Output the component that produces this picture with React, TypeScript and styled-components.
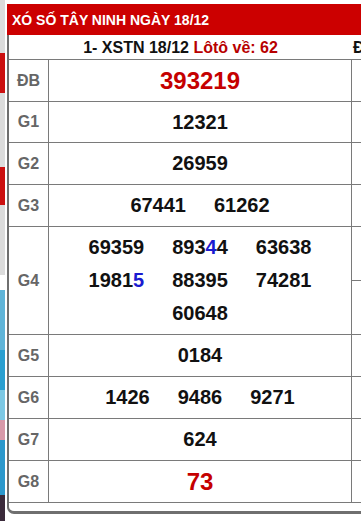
import React from 'react'
import styled, { createGlobalStyle } from 'styled-components'

const GlobalStyle = createGlobalStyle`
  html, body {
    margin: 0;
    padding: 0;
    background: #ffffff;
    font-family: 'Liberation Sans', Arial, sans-serif;
  }
`

const Page = styled.div`
  width: 361px;
  height: 521px;
  display: flex;
  gap: 2px;
  overflow: hidden;
`

const Strip = styled.div`
  width: 5px;
  flex: none;
  display: flex;
  flex-direction: column;
`

const StripPart = styled.div<{ $h: number; $bg: string }>`
  height: ${({ $h }) => $h}px;
  flex: none;
  background: ${({ $bg }) => $bg};
`

const Card = styled.div`
  margin-top: 4px;
  flex: 1;
  min-width: 0;
  align-self: flex-start;
  overflow: hidden;
`

const Header = styled.div`
  height: 31px;
  background: #cc0000;
  color: #ffffff;
  font-weight: bold;
  font-size: 14px;
  line-height: 32px;
  padding-left: 5px;
  white-space: nowrap;
`

const Body = styled.div`
  display: flex;
  border-left: 2px solid #6f6f6f;
  border-bottom: 3px solid #6f6f6f;
  border-bottom-left-radius: 7px;
  padding-bottom: 8px;
  width: 480px;
`

const MainPanel = styled.div`
  width: 343px;
  flex: none;
`

const SidePanel = styled.div`
  flex: 1;
`

const Subtitle = styled.div<{ $align: 'center' | 'left' }>`
  height: 24px;
  line-height: 26px;
  font-size: 16px;
  font-weight: bold;
  color: #111111;
  text-align: ${({ $align }) => $align};
  padding-left: ${({ $align }) => ($align === 'left' ? '1px' : '0')};
  white-space: nowrap;
`

const Loto = styled.span`
  color: #b80000;
`

const Row = styled.div<{ $h: number }>`
  display: flex;
  height: ${({ $h }) => $h}px;
  border-top: 1px solid #7a7a7a;
  box-sizing: border-box;
`

const Label = styled.div`
  width: 39px;
  flex: none;
  border-right: 1px solid #7a7a7a;
  display: flex;
  align-items: center;
  justify-content: center;
  color: #666666;
  font-weight: bold;
  font-size: 16px;
`

const Numbers = styled.div`
  flex: 1;
  border-right: 1px solid #7a7a7a;
  display: flex;
  flex-wrap: wrap;
  align-content: center;
  justify-content: center;
  column-gap: 28px;
  padding: 0 4px;
`

const Num = styled.span<{ $big?: boolean; $red?: boolean }>`
  font-weight: bold;
  font-size: ${({ $big }) => ($big ? '24px' : '20px')};
  line-height: 33px;
  color: ${({ $red }) => ($red ? '#c50000' : '#111111')};
`

const Hit = styled.span`
  color: #1a1ad0;
`

const SideCell = styled.div<{ $h: number }>`
  height: ${({ $h }) => $h}px;
  border-top: 1px solid #7a7a7a;
  box-sizing: border-box;
`

type Prize = {
  label: string
  height: number
  values: string[]
  big?: boolean
  red?: boolean
}

const prizes: Prize[] = [
  { label: 'ĐB', height: 42, values: ['393219'], big: true, red: true },
  { label: 'G1', height: 41, values: ['12321'] },
  { label: 'G2', height: 42, values: ['26959'] },
  { label: 'G3', height: 42, values: ['67441', '61262'] },
  {
    label: 'G4',
    height: 108,
    values: ['69359', '89344', '63638', '19815', '88395', '74281', '60648']
  },
  { label: 'G5', height: 42, values: ['0184'] },
  { label: 'G6', height: 42, values: ['1426', '9486', '9271'] },
  { label: 'G7', height: 42, values: ['624'] },
  { label: 'G8', height: 42, values: ['73'], big: true, red: true }
]

const highlight: Record<string, number> = {
  '89344': 3,
  '19815': 4
}

const renderValue = (value: string): React.ReactNode => {
  const at = highlight[value]
  if (at === undefined) return value
  return (
    <>
      {value.slice(0, at)}
      <Hit>{value[at]}</Hit>
      {value.slice(at + 1)}
    </>
  )
}

const sideHeights = [42, 41, 42, 42, 54, 54, 42, 42, 42, 42]

const strip: Array<[number, string]> = [
  [53, '#dcdcdc'],
  [40, '#cc1010'],
  [74, '#dcdcdc'],
  [38, '#cc1010'],
  [70, '#dcdcdc'],
  [15, '#ffffff'],
  [60, '#5fb4d8'],
  [40, '#2a9fd0'],
  [30, '#7cc8e4'],
  [20, '#d89aaa'],
  [55, '#2c98cc'],
  [26, '#3a2a3a']
]

export default function App() {
  return (
    <Page>
      <GlobalStyle />
      <Strip>
        {strip.map(([h, bg], i) => (
          <StripPart key={i} $h={h} $bg={bg} />
        ))}
      </Strip>
      <Card>
        <Header>XÓ SỐ TÂY NINH NGÀY 18/12</Header>
        <Body>
          <MainPanel>
            <Subtitle $align="center">
              1- XSTN 18/12 <Loto>Lôtô về: 62</Loto>
            </Subtitle>
            {prizes.map((p) => (
              <Row key={p.label} $h={p.height}>
                <Label>{p.label}</Label>
                <Numbers>
                  {p.values.map((v, i) => (
                    <Num key={i} $big={p.big} $red={p.red}>
                      {renderValue(v)}
                    </Num>
                  ))}
                </Numbers>
              </Row>
            ))}
            <Row $h={1} />
          </MainPanel>
          <SidePanel>
            <Subtitle $align="left">Đầu</Subtitle>
            {sideHeights.map((h, i) => (
              <SideCell key={i} $h={h} />
            ))}
            <SideCell $h={1} />
          </SidePanel>
        </Body>
      </Card>
    </Page>
  )
}
